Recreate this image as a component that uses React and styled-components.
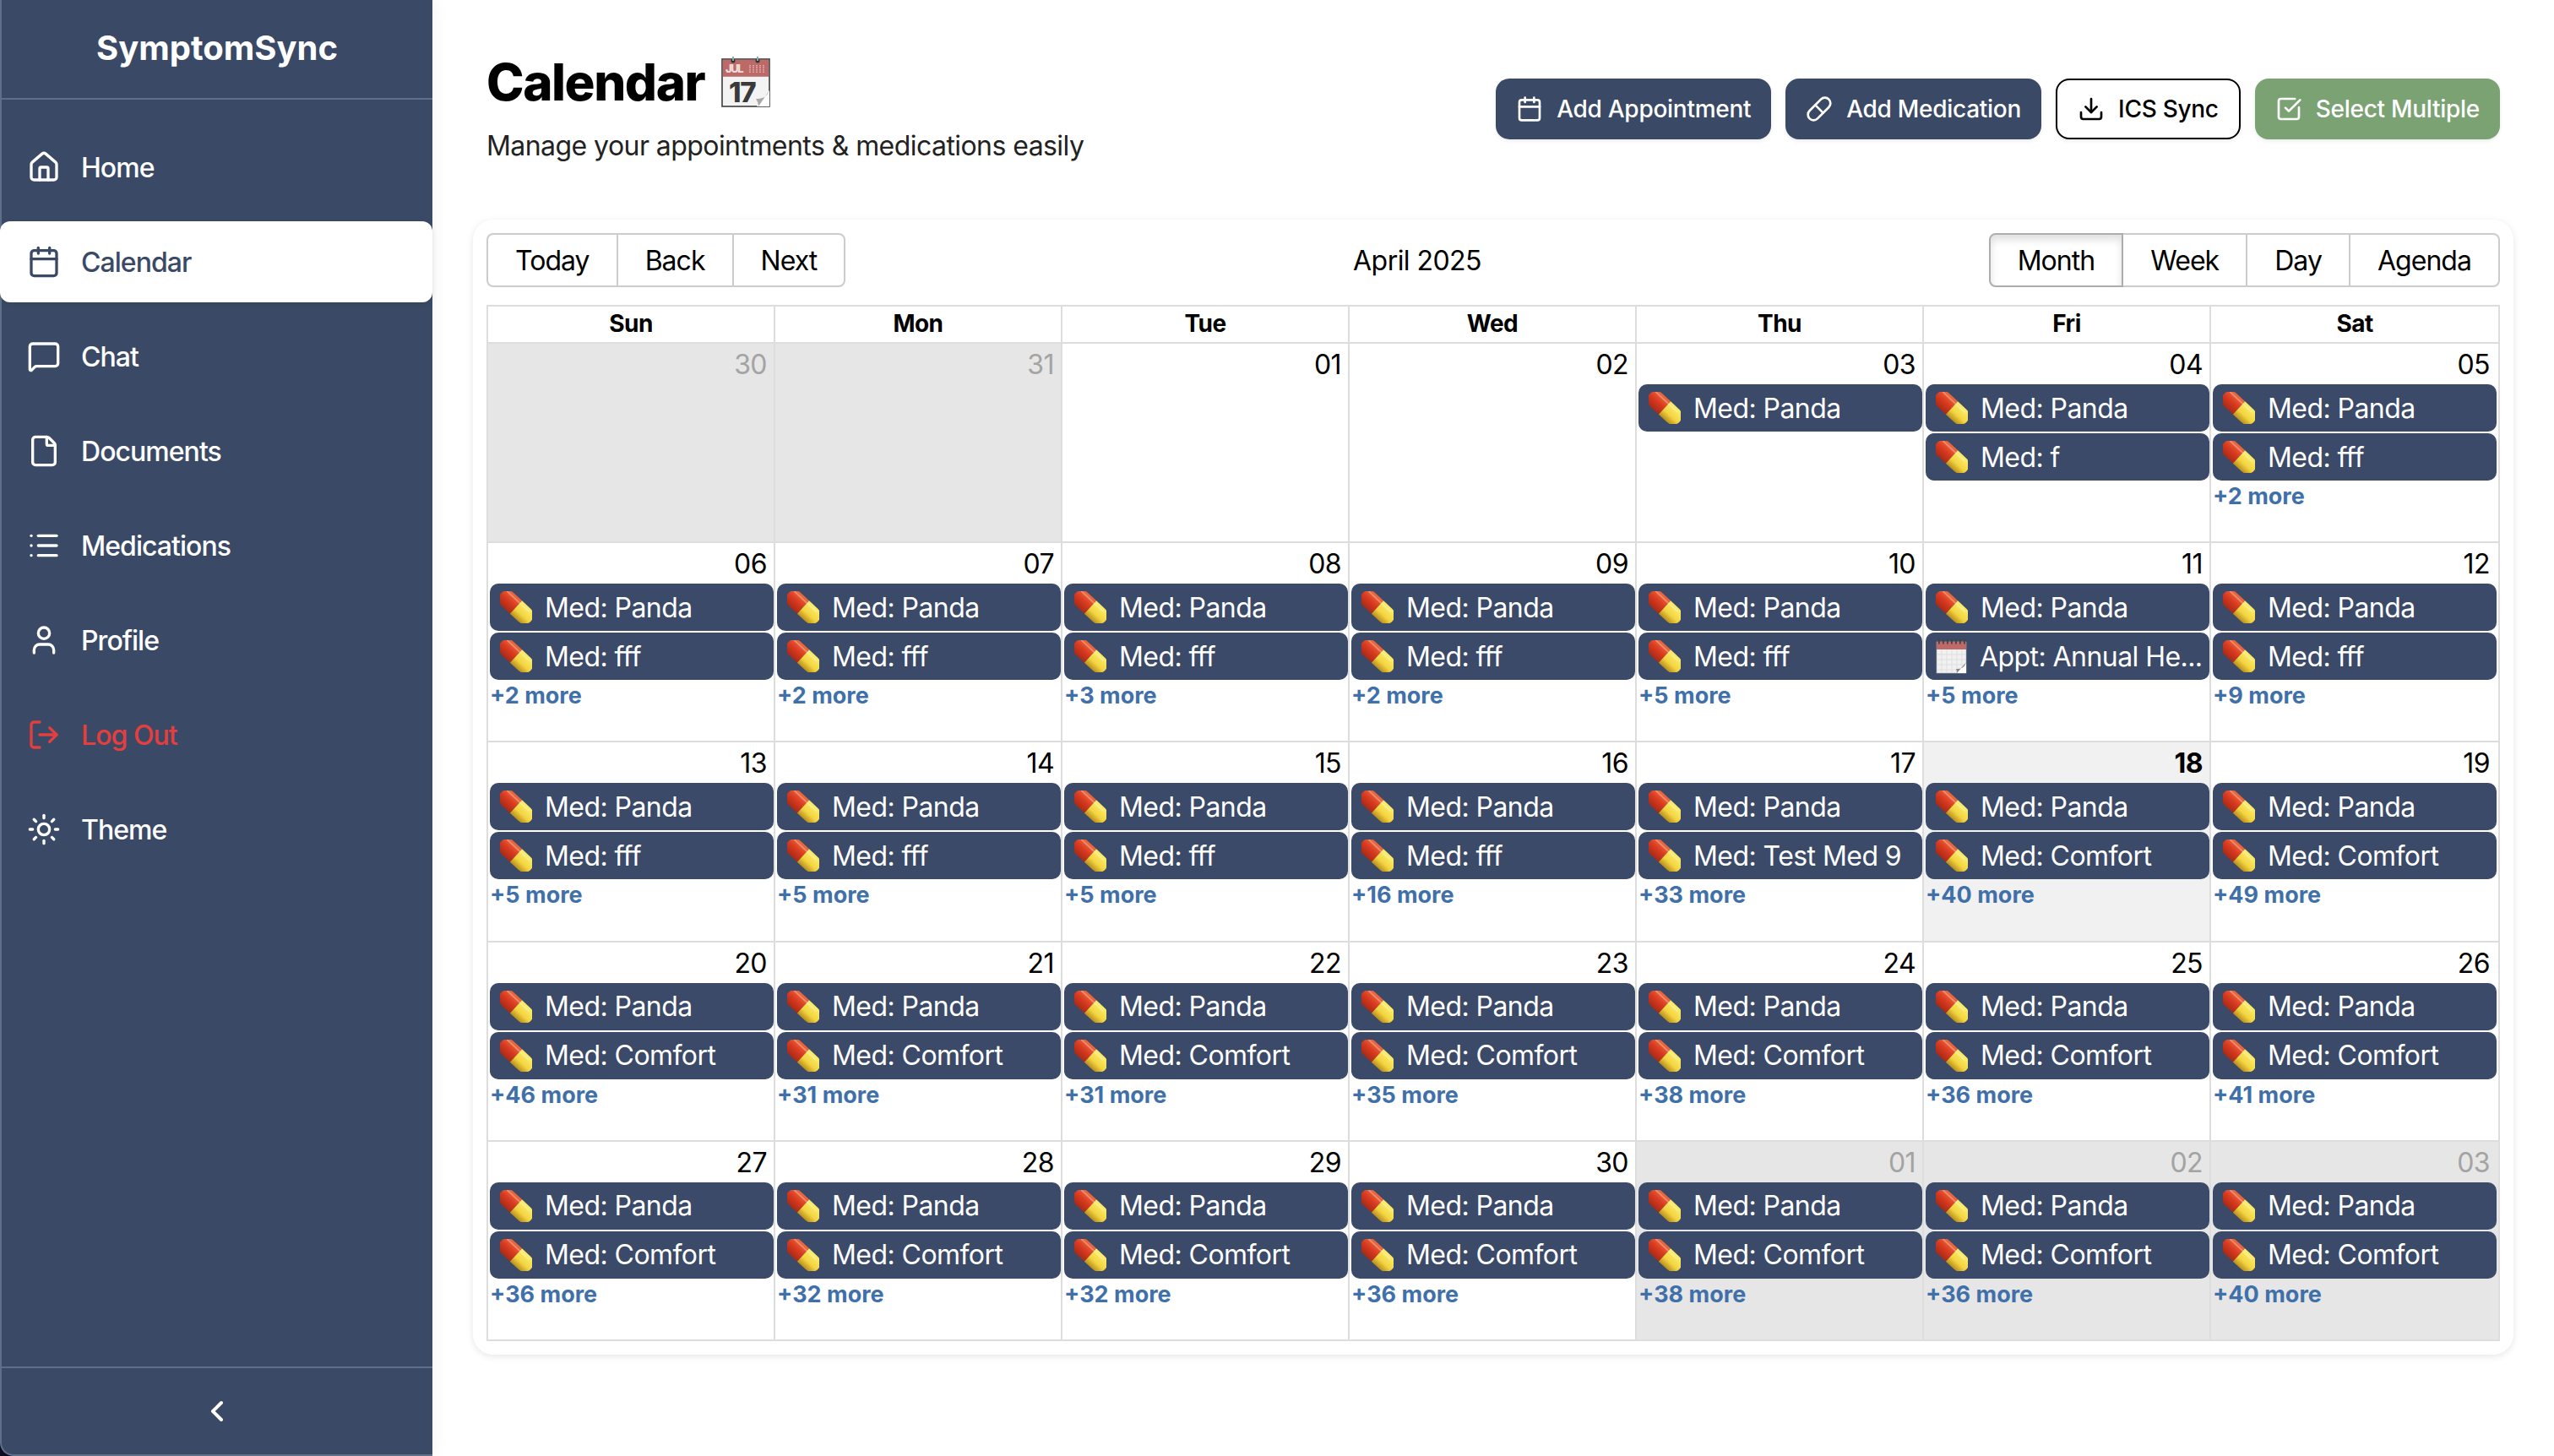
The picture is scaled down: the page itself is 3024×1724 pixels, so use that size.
import React, { useId } from "react";
import styled, { createGlobalStyle } from "styled-components";
import {
  House, Calendar as CalIcon, MessageSquare, File, List, User, LogOut, Sun,
  ChevronLeft, Pill, Download, SquareCheckBig,
} from "lucide-react";

const Global = createGlobalStyle`
  html, body { margin: 0; padding: 0; background: #fff; }
  #root { height: 100vh; }
  * { box-sizing: border-box; }
  body { font-family: Inter, "Liberation Sans", sans-serif; color: #000; letter-spacing: -0.035em; }
`;

const Shell = styled.div`
  display: flex;
  height: 1724px;
  width: 3024px;
  overflow: hidden;
`;
const SideFrame = styled.div`
  width: 512px;
  flex: none;
  box-shadow: 4px 0 16px rgba(0, 0, 0, 0.04);
  z-index: 1;
  background: linear-gradient(to top, #0e0c20 20px, #fff 20px);
`;
const Side = styled.aside`
  height: 100%;
  background: #3a4a66;
  border-left: 2px solid #5f6f8a;
  border-bottom: 2px solid #5f6f8a;
  border-bottom-left-radius: 16px;
  display: flex;
  flex-direction: column;
  color: #fff;
`;
const Brand = styled.div`
  height: 118px;
  flex: none;
  border-bottom: 2px solid #5f6f8a;
  display: flex;
  align-items: center;
  justify-content: center;
  font-size: 40px;
  font-weight: 700;
  letter-spacing: 0;
  padding-bottom: 4px;
`;
const Nav = styled.nav`
  flex: 1;
  display: flex;
  flex-direction: column;
  gap: 16px;
  padding-top: 32px;
  margin-left: -2px;
`;
const NavItem = styled.div`
  height: 96px;
  display: flex;
  align-items: center;
  gap: 24px;
  padding-left: 32px;
  border-radius: 12px;
  font-size: 32px;
  font-weight: 500;
  letter-spacing: -0.03em;
  color: ${(p) => (p.$active ? "#3a4a66" : p.$danger ? "#e53e3e" : "#fff")};
  background: ${(p) => (p.$active ? "#fff" : "transparent")};
  box-shadow: ${(p) => (p.$active ? "0 2px 6px rgba(0,0,0,.1)" : "none")};
`;
const SideFoot = styled.div`
  height: 104px;
  flex: none;
  border-top: 2px solid #5f6f8a;
  display: flex;
  align-items: center;
  justify-content: center;
`;
const Main = styled.main`
  flex: 1;
  min-width: 0;
  padding: 48px 48px 0;
  display: flex;
  flex-direction: column;
`;
const Head = styled.header`
  height: 164px;
  margin-bottom: 48px;
  padding: 0 16px;
  display: flex;
  align-items: center;
  justify-content: space-between;
`;
const TitleBlock = styled.div`
  display: flex;
  flex-direction: column;
  gap: 16px;
  margin-top: -3px;
`;
const Title = styled.h1`
  margin: 0;
  font-size: 60px;
  line-height: 72px;
  font-weight: 800;
  letter-spacing: -0.024em;
  display: flex;
  align-items: center;
  gap: 20px;
`;
const Subtitle = styled.p`
  margin: 0;
  font-size: 32px;
  line-height: 48px;
  color: #222;
`;
const Actions = styled.div`
  display: flex;
  gap: 17px;
  margin-top: -2px;
`;
const ActionBtn = styled.button`
  height: 72px;
  padding: 0 24px;
  border-radius: 16px;
  display: flex;
  align-items: center;
  gap: 16px;
  font: 500 28px Inter, sans-serif;
  letter-spacing: -0.01em;
  white-space: nowrap;
  border: ${(p) => (p.$variant === "outline" ? "2px solid #000" : "none")};
  color: ${(p) => (p.$variant === "outline" ? "#000" : "#fff")};
  background: ${(p) => (p.$variant === "outline" ? "#fff" : p.$variant === "green" ? "#7aa272" : "#3a4a66")};
  box-shadow: 0 2px 4px rgba(0, 0, 0, 0.08);
`;
const Card = styled.section`
  height: 1344px;
  width: 2416px;
  padding: 16px;
  background: #fff;
  border-radius: 24px;
  box-shadow: 0 2px 8px rgba(0, 0, 0, 0.1);
  display: flex;
  flex-direction: column;
`;
const Toolbar = styled.div`
  display: flex;
  align-items: center;
  height: 64px;
  margin-bottom: 21px;
  flex: none;
`;
const BtnGroup = styled.div`
  display: flex;
`;
const ToolBtn = styled.button`
  height: 64px;
  padding: 0 32px;
  margin-left: -2px;
  font: 400 32px Inter, sans-serif;
  letter-spacing: -0.03em;
  color: #000;
  background: #fff;
  border: 2px solid ${(p) => (p.$active ? "#adadad" : "#ccc")};
  box-shadow: ${(p) => (p.$active ? "inset 0 6px 10px rgba(0,0,0,.125)" : "none")};
  position: relative;
  z-index: ${(p) => (p.$active ? 1 : 0)};
  &:first-child { margin-left: 0; border-radius: 8px 0 0 8px; }
  &:last-child { border-radius: 0 8px 8px 0; }
`;
const MonthLabel = styled.div`
  flex: 1;
  text-align: center;
  font-size: 32px;
`;
const Month = styled.div`
  flex: 1;
  min-height: 0;
  display: flex;
  flex-direction: column;
  border: 2px solid #ddd;
`;
const HeadRow = styled.div`
  display: grid;
  grid-template-columns: repeat(7, 1fr);
  height: 42px;
  flex: none;
`;
const HeadCell = styled.div`
  font-size: 28px;
  font-weight: 700;
  line-height: 40px;
  letter-spacing: -0.02em;
  text-align: center;
  border-right: 2px solid #ddd;
  &:last-child { border-right: none; }
`;
const Week = styled.div`
  flex: 1;
  min-height: 0;
  display: grid;
  grid-template-columns: repeat(7, minmax(0, 1fr));
  border-top: 2px solid #ddd;
`;
const Cell = styled.div`
  min-width: 0;
  padding-left: 2px;
  border-right: 2px solid #ddd;
  background: ${(p) => (p.$off ? "#e6e6e6" : p.$today ? "#f1f1f1" : "#fff")};
  &:last-child { border-right: none; padding-right: 2px; }
`;
const DateNum = styled.div`
  height: 48px;
  line-height: 50px;
  padding-right: 8px;
  text-align: right;
  font-size: 32px;
  font-weight: ${(p) => (p.$today ? 700 : 400)};
  color: ${(p) => (p.$off ? "#a3a3a3" : "#000")};
`;
const Event = styled.div`
  height: 56px;
  margin-bottom: 2px;
  border-radius: 10px;
  background: #3b4a68;
  color: #fff;
  display: flex;
  align-items: center;
  gap: 15px;
  padding: 0 4px 0 12px;
  font-size: 32px;
`;
const EventText = styled.span`
  min-width: 0;
  white-space: nowrap;
`;
const More = styled.div`
  font-size: 27px;
  line-height: 34px;
  font-weight: 700;
  letter-spacing: 0;
  color: #3f70a9;
`;

const PillEmoji = () => {
  const id = useId();
  return (
    <svg width="38" height="38" viewBox="0 0 40 40" style={{ flex: "none" }}>
      <defs>
        <linearGradient id={id + "r"} x1="0" y1="0" x2="0" y2="1">
          <stop offset="0" stopColor="#ef6a3c" />
          <stop offset="0.5" stopColor="#d93a20" />
          <stop offset="1" stopColor="#a92a16" />
        </linearGradient>
        <linearGradient id={id + "y"} x1="0" y1="0" x2="0" y2="1">
          <stop offset="0" stopColor="#fbee6c" />
          <stop offset="0.6" stopColor="#f3d440" />
          <stop offset="1" stopColor="#b98e1c" />
        </linearGradient>
      </defs>
      <g transform="rotate(43 20 20)">
        <path d="M20 9H5.5a11 11 0 0 0 0 22H20z" fill={`url(#${id}r)`} />
        <path d="M20 9h14.5a11 11 0 0 1 0 22H20z" fill={`url(#${id}y)`} />
        <rect x="-2" y="12" width="38" height="2" rx="1" fill="#fff" opacity="0.3" />
      </g>
    </svg>
  );
};

const SpiralEmoji = () => (
  <svg width="37" height="42" viewBox="0 0 37 42" style={{ flex: "none" }}>
    <rect x="1" y="4" width="35" height="37" fill="#f1f1f1" stroke="#b0b0b0" strokeWidth="0.6" />
    <rect x="1" y="4" width="35" height="9" fill="#bd6a68" />
    {[3, 8, 13, 18, 23, 28, 33].map((x) => (
      <rect key={x} x={x} y="0" width="1.8" height="6.5" fill="#444" />
    ))}
    {[7, 13, 19, 25, 31].map((x) => (
      <line key={x} x1={x} y1="13" x2={x} y2="41" stroke="#dcdcdc" strokeWidth="0.8" />
    ))}
    {[19, 25, 31, 37].map((y) => (
      <line key={y} x1="1" y1={y} x2="36" y2={y} stroke="#dcdcdc" strokeWidth="0.8" />
    ))}
    <path d="M36 28L25 41h11z" fill="#fff" />
    <path d="M36 28c-2 7-6 8-12 8 1 2 1 4 1 5z" fill="#8a8a8a" />
  </svg>
);

const TearCalendar = () => (
  <svg width="58" height="60" viewBox="0 0 58 60" style={{ flex: "none", overflow: "visible" }}>
    <rect x="1" y="3" width="56" height="56" fill="#f3f3f3" stroke="#3d3d3d" strokeWidth="1.6" />
    <rect x="1.8" y="3.8" width="54.4" height="20" fill="#bc6a68" />
    <text x="5" y="19" fontFamily="Inter, sans-serif" fontSize="13" fill="#f1dcdc">JUL</text>
    {[34, 38, 42, 46, 50].map((x) => (
      <line key={x} x1={x} y1="10" x2={x} y2="20" stroke="#d9a8a6" strokeWidth="2" strokeDasharray="1.5 1" />
    ))}
    <circle cx="14" cy="5" r="2.5" fill="#333" />
    <circle cx="43" cy="5" r="2.5" fill="#333" />
    <rect x="13" y="0" width="2" height="5" fill="#8aa" />
    <rect x="42" y="0" width="2" height="5" fill="#8aa" />
    <text x="9" y="54" fontFamily="Inter, sans-serif" fontSize="33" fill="#3a3a3a">17</text>
    <path d="M57 40L42 59h15z" fill="#fff" />
    <path d="M57 40c-3 8-8 10-16 10 2 3 3 6 3 9z" fill="#a8a8a8" />
  </svg>
);

const P = "Med: Panda";
const F = "Med: fff";
const C = "Med: Comfort";
const OFF = true;
const weeks = [
  [
    { d: "30", off: OFF }, { d: "31", off: OFF }, { d: "01" }, { d: "02" },
    { d: "03", e: [P] }, { d: "04", e: [P, "Med: f"] }, { d: "05", e: [P, F], m: 2 },
  ],
  [
    { d: "06", e: [P, F], m: 2 }, { d: "07", e: [P, F], m: 2 }, { d: "08", e: [P, F], m: 3 },
    { d: "09", e: [P, F], m: 2 }, { d: "10", e: [P, F], m: 5 },
    { d: "11", e: [P, "Appt: Annual He..."], m: 5 }, { d: "12", e: [P, F], m: 9 },
  ],
  [
    { d: "13", e: [P, F], m: 5 }, { d: "14", e: [P, F], m: 5 }, { d: "15", e: [P, F], m: 5 },
    { d: "16", e: [P, F], m: 16 }, { d: "17", e: [P, "Med: Test Med 9"], m: 33 },
    { d: "18", e: [P, C], m: 40, today: true }, { d: "19", e: [P, C], m: 49 },
  ],
  [
    { d: "20", e: [P, C], m: 46 }, { d: "21", e: [P, C], m: 31 }, { d: "22", e: [P, C], m: 31 },
    { d: "23", e: [P, C], m: 35 }, { d: "24", e: [P, C], m: 38 }, { d: "25", e: [P, C], m: 36 },
    { d: "26", e: [P, C], m: 41 },
  ],
  [
    { d: "27", e: [P, C], m: 36 }, { d: "28", e: [P, C], m: 32 }, { d: "29", e: [P, C], m: 32 },
    { d: "30", e: [P, C], m: 36 }, { d: "01", e: [P, C], m: 38, off: OFF },
    { d: "02", e: [P, C], m: 36, off: OFF }, { d: "03", e: [P, C], m: 40, off: OFF },
  ],
];
const days = ["Sun", "Mon", "Tue", "Wed", "Thu", "Fri", "Sat"];
const nav = [
  ["Home", House], ["Calendar", CalIcon, "active"], ["Chat", MessageSquare], ["Documents", File],
  ["Medications", List], ["Profile", User], ["Log Out", LogOut, "danger"], ["Theme", Sun],
];

export default function App() {
  return (
    <Shell>
      <Global />
      <SideFrame>
        <Side>
          <Brand>SymptomSync</Brand>
          <Nav>
            {nav.map(([label, Icon, kind]) => (
              <NavItem key={label} $active={kind === "active"} $danger={kind === "danger"}>
                <Icon size={40} strokeWidth={2} />
                {label}
              </NavItem>
            ))}
          </Nav>
          <SideFoot>
            <ChevronLeft size={40} strokeWidth={2.4} color="#fff" />
          </SideFoot>
        </Side>
      </SideFrame>
      <Main>
        <Head>
          <TitleBlock>
            <Title>Calendar <TearCalendar /></Title>
            <Subtitle>Manage your appointments &amp; medications easily</Subtitle>
          </TitleBlock>
          <Actions>
            <ActionBtn><CalIcon size={32} strokeWidth={2} />Add Appointment</ActionBtn>
            <ActionBtn><Pill size={32} strokeWidth={2} />Add Medication</ActionBtn>
            <ActionBtn $variant="outline"><Download size={32} strokeWidth={2} />ICS Sync</ActionBtn>
            <ActionBtn $variant="green"><SquareCheckBig size={32} strokeWidth={2} />Select Multiple</ActionBtn>
          </Actions>
        </Head>
        <Card>
          <Toolbar>
            <BtnGroup>
              <ToolBtn>Today</ToolBtn>
              <ToolBtn>Back</ToolBtn>
              <ToolBtn>Next</ToolBtn>
            </BtnGroup>
            <MonthLabel>April 2025</MonthLabel>
            <BtnGroup>
              <ToolBtn $active>Month</ToolBtn>
              <ToolBtn>Week</ToolBtn>
              <ToolBtn>Day</ToolBtn>
              <ToolBtn>Agenda</ToolBtn>
            </BtnGroup>
          </Toolbar>
          <Month>
            <HeadRow>
              {days.map((d) => (
                <HeadCell key={d}>{d}</HeadCell>
              ))}
            </HeadRow>
            {weeks.map((w, wi) => (
              <Week key={wi}>
                {w.map((c, i) => (
                  <Cell key={i} $off={c.off} $today={c.today}>
                    <DateNum $off={c.off} $today={c.today}>{c.d}</DateNum>
                    {(c.e || []).map((t) => (
                      <Event key={t}>
                        {t.startsWith("Appt") ? <SpiralEmoji /> : <PillEmoji />}
                        <EventText>{t}</EventText>
                      </Event>
                    ))}
                    {c.m ? <More>+{c.m} more</More> : null}
                  </Cell>
                ))}
              </Week>
            ))}
          </Month>
        </Card>
      </Main>
    </Shell>
  );
}
